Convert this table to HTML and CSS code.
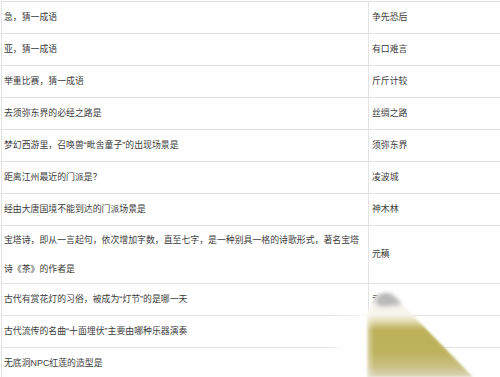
FILE: index.html
```html
<!DOCTYPE html>
<html lang="zh-CN">
<head>
<meta charset="utf-8">
<title>梦幻西游 题目答案</title>
<link rel="stylesheet" href="styles.css">
</head>
<body>
<div class="page">
  <div class="qa">
    <div class="row"><div class="q">急，猜一成语</div><div class="a">争先恐后</div></div>
    <div class="row"><div class="q">亚，猜一成语</div><div class="a">有口难言</div></div>
    <div class="row"><div class="q">举重比赛，猜一成语</div><div class="a">斤斤计较</div></div>
    <div class="row"><div class="q">去须弥东界的必经之路是</div><div class="a">丝绸之路</div></div>
    <div class="row"><div class="q">梦幻西游里，召唤兽“毗舍童子”的出现场景是</div><div class="a">须弥东界</div></div>
    <div class="row"><div class="q">距离江州最近的门派是？</div><div class="a">凌波城</div></div>
    <div class="row"><div class="q">经由大唐国境不能到达的门派场景是</div><div class="a">神木林</div></div>
    <div class="row"><div class="q">宝塔诗，即从一言起句，依次增加字数，直至七字，是一种别具一格的诗歌形式，著名宝塔诗《茶》的作者是</div><div class="a">元稹</div></div>
    <div class="row"><div class="q">古代有赏花灯的习俗，被成为“灯节”的是哪一天</div><div class="a">元宵</div></div>
    <div class="row"><div class="q">古代流传的名曲“十面埋伏”主要由哪种乐器演奏</div><div class="a">琵琶</div></div>
    <div class="row"><div class="q">无底洞NPC红莲的造型是</div><div class="a">老太婆</div></div>
  </div>
  <svg class="pencil" width="170" height="97" viewBox="0 0 170 97" aria-hidden="true">
    <defs>
      <filter id="soft" x="-30%" y="-30%" width="160%" height="160%"><feGaussianBlur stdDeviation="4"/></filter>
      <filter id="edge" x="-10%" y="-10%" width="120%" height="120%"><feGaussianBlur stdDeviation="1.2"/></filter>
      <filter id="tipblur" x="-50%" y="-50%" width="200%" height="200%"><feGaussianBlur stdDeviation="2"/></filter>
      <linearGradient id="body" x1="0" y1="0" x2="0" y2="1">
        <stop offset="0" stop-color="#f2f2f0"/>
        <stop offset="0.25" stop-color="#f6f5ee"/>
        <stop offset="0.32" stop-color="#e6dfb8"/>
        <stop offset="0.43" stop-color="#bdb15a"/>
        <stop offset="0.7" stop-color="#beb25e"/>
        <stop offset="0.88" stop-color="#cac185"/>
        <stop offset="1" stop-color="#dcd7bd"/>
      </linearGradient>
      <linearGradient id="fade" x1="0" y1="0" x2="1" y2="0">
        <stop offset="0" stop-color="#ffffff" stop-opacity="1"/>
        <stop offset="1" stop-color="#ffffff" stop-opacity="0"/>
      </linearGradient>
    </defs>
    <rect x="6" y="38" width="34" height="70" fill="#ffffff" filter="url(#soft)"/>
    <polygon points="47,14 62,14 143,97 37,97 37,34" fill="url(#body)" filter="url(#edge)"/>
    <path d="M46 20 Q48 13 56 13 Q62 13 66 18 L72 24 Q60 27 50 26 Q45 25 46 20 Z" fill="#b9b9b9" filter="url(#tipblur)"/>
    <rect x="30" y="32" width="14" height="65" fill="url(#fade)" filter="url(#edge)"/>
  </svg>
</div>
</body>
</html>
```
FILE: styles.css
```css
html, body {
  margin: 0;
  padding: 0;
  background: #ffffff;
  overflow: hidden;
}

.page {
  position: relative;
  width: 500px;
  height: 377px;
  overflow: hidden;
}

.qa {
  margin: 1px 0 0 1px;
  border-top: 1px solid #e3e3e3;
  border-left: 1px solid #e3e3e3;
  font-family: "Liberation Sans", "Noto Sans CJK SC", sans-serif;
  font-size: 8.9px;
  line-height: 28.5px;
  color: #3c3c3c;
}

.row {
  display: grid;
  grid-template-columns: 367px 1fr;
  border-bottom: 1px solid #e3e3e3;
  min-height: 31px;
}

.q {
  display: flex;
  align-items: center;
  padding: 0 8px 0 2px;
  border-right: 1px solid #e3e3e3;
}

.a {
  display: flex;
  align-items: center;
  padding: 0 0 0 3px;
}

.pencil {
  position: absolute;
  left: 330px;
  top: 280px;
}
```
